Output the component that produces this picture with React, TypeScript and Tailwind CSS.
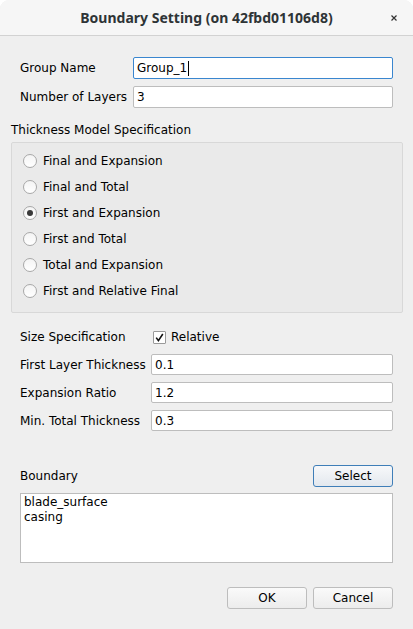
import React from "react";

const font = { fontFamily: '"DejaVu Sans", sans-serif' };

function Input({ value, focused, cursor }: { value: string; focused?: boolean; cursor?: boolean }) {
  return (
    <div
      className={
        "flex-1 h-full bg-white rounded-[2px] border flex items-center pl-[3px] text-[12px] text-black " +
        (focused ? "border-[#3a86cf]" : "border-[#bdbdbd]")
      }
    >
      <span>{value}</span>
      {cursor && <span className="w-px h-[15px] bg-black ml-px" />}
    </div>
  );
}

function Radio({ label, checked }: { label: string; checked?: boolean }) {
  return (
    <div className="h-[26px] flex items-center pl-[11px]">
      <div className="w-[14px] h-[14px] rounded-full border border-[#a8a8a8] bg-gradient-to-b from-[#f4f4f4] to-white flex items-center justify-center">
        {checked && <div className="w-[6px] h-[6px] rounded-full bg-[#3a3a3a]" />}
      </div>
      <span className="ml-[6px] text-[12px] text-black">{label}</span>
    </div>
  );
}

function Btn({ label, primary }: { label: string; primary?: boolean }) {
  return (
    <div
      className={
        "w-[80px] h-[22px] rounded-[3px] border flex items-center justify-center text-[12px] text-black bg-gradient-to-b " +
        (primary ? "border-[#3f7eb8] from-[#f7f8fa] to-[#e3e8ee]" : "border-[#bdbdbd] from-[#fafafa] to-[#ececec]")
      }
    >
      {label}
    </div>
  );
}

export default function App() {
  return (
    <div className="w-[413px] h-[629px] bg-white overflow-hidden" style={font}>
      <div className="w-full h-full rounded-t-[9px] bg-[#efefef] flex flex-col overflow-hidden">
        <div className="h-[36px] shrink-0 bg-[#f6f6f6] border-b border-[#d2d2d2] flex items-center relative">
          <div
            className="w-full text-center text-[14px] font-bold text-[#2e3436]"
            style={{ fontFamily: '"Noto Sans", sans-serif' }}
          >
            Boundary Setting (on 42fbd01106d8)
          </div>
          <svg className="absolute right-[16px] top-[15px]" width="6" height="6" viewBox="0 0 6 6">
            <path d="M0.5 0.5 L5.5 5.5 M5.5 0.5 L0.5 5.5" stroke="#333" strokeWidth="1.2" />
          </svg>
        </div>

        <div className="flex flex-col">
          <div className="mt-[21px] ml-[20px] mr-[20px] h-[22px] flex items-center">
            <span className="w-[113px] text-[12px] text-black">Group Name</span>
            <Input value="Group_1" focused cursor />
          </div>
          <div className="mt-[7px] ml-[20px] mr-[20px] h-[22px] flex items-center">
            <span className="w-[113px] text-[12px] text-black">Number of Layers</span>
            <Input value="3" />
          </div>

          <div className="mt-[14px] ml-[11px] h-[16px] flex items-center text-[12px] text-black">
            Thickness Model Specification
          </div>
          <div className="mt-[4px] ml-[11px] mr-[10px] border border-[#d8d8d8] rounded-[2px] bg-[#eaeaea] pt-[5px] pb-[8px]">
            <Radio label="Final and Expansion" />
            <Radio label="Final and Total" />
            <Radio label="First and Expansion" checked />
            <Radio label="First and Total" />
            <Radio label="Total and Expansion" />
            <Radio label="First and Relative Final" />
          </div>

          <div className="mt-[13px] ml-[20px] mr-[20px] h-[22px] flex items-center">
            <span className="w-[133px] text-[12px] text-black">Size Specification</span>
            <div className="w-[13px] h-[13px] bg-white border border-[#9a9a9a] rounded-[1px] flex items-center justify-center">
              <svg width="9" height="9" viewBox="0 0 9 9">
                <path d="M1.2 4.6 L3.4 7.6 L7.8 1" stroke="#111" strokeWidth="1.6" fill="none" />
              </svg>
            </div>
            <span className="ml-[5px] text-[12px] text-black">Relative</span>
          </div>
          <div className="mt-[6px] ml-[20px] mr-[20px] h-[21px] flex items-center">
            <span className="w-[131px] text-[12px] text-black">First Layer Thickness</span>
            <Input value="0.1" />
          </div>
          <div className="mt-[7px] ml-[20px] mr-[20px] h-[21px] flex items-center">
            <span className="w-[131px] text-[12px] text-black">Expansion Ratio</span>
            <Input value="1.2" />
          </div>
          <div className="mt-[7px] ml-[20px] mr-[20px] h-[21px] flex items-center">
            <span className="w-[131px] text-[12px] text-black">Min. Total Thickness</span>
            <Input value="0.3" />
          </div>

          <div className="mt-[34px] ml-[20px] mr-[20px] h-[22px] flex items-center justify-between">
            <span className="text-[12px] text-black">Boundary</span>
            <Btn label="Select" primary />
          </div>
          <div className="mt-[6px] ml-[20px] mr-[20px] h-[70px] bg-white border border-[#bdbdbd] px-[3px] pt-[1px] text-[12px] leading-[15px] text-black">
            <div>blade_surface</div>
            <div>casing</div>
          </div>

          <div className="mt-[24px] mr-[20px] flex justify-end gap-[6px]">
            <Btn label="OK" />
            <Btn label="Cancel" />
          </div>
        </div>
      </div>
    </div>
  );
}
